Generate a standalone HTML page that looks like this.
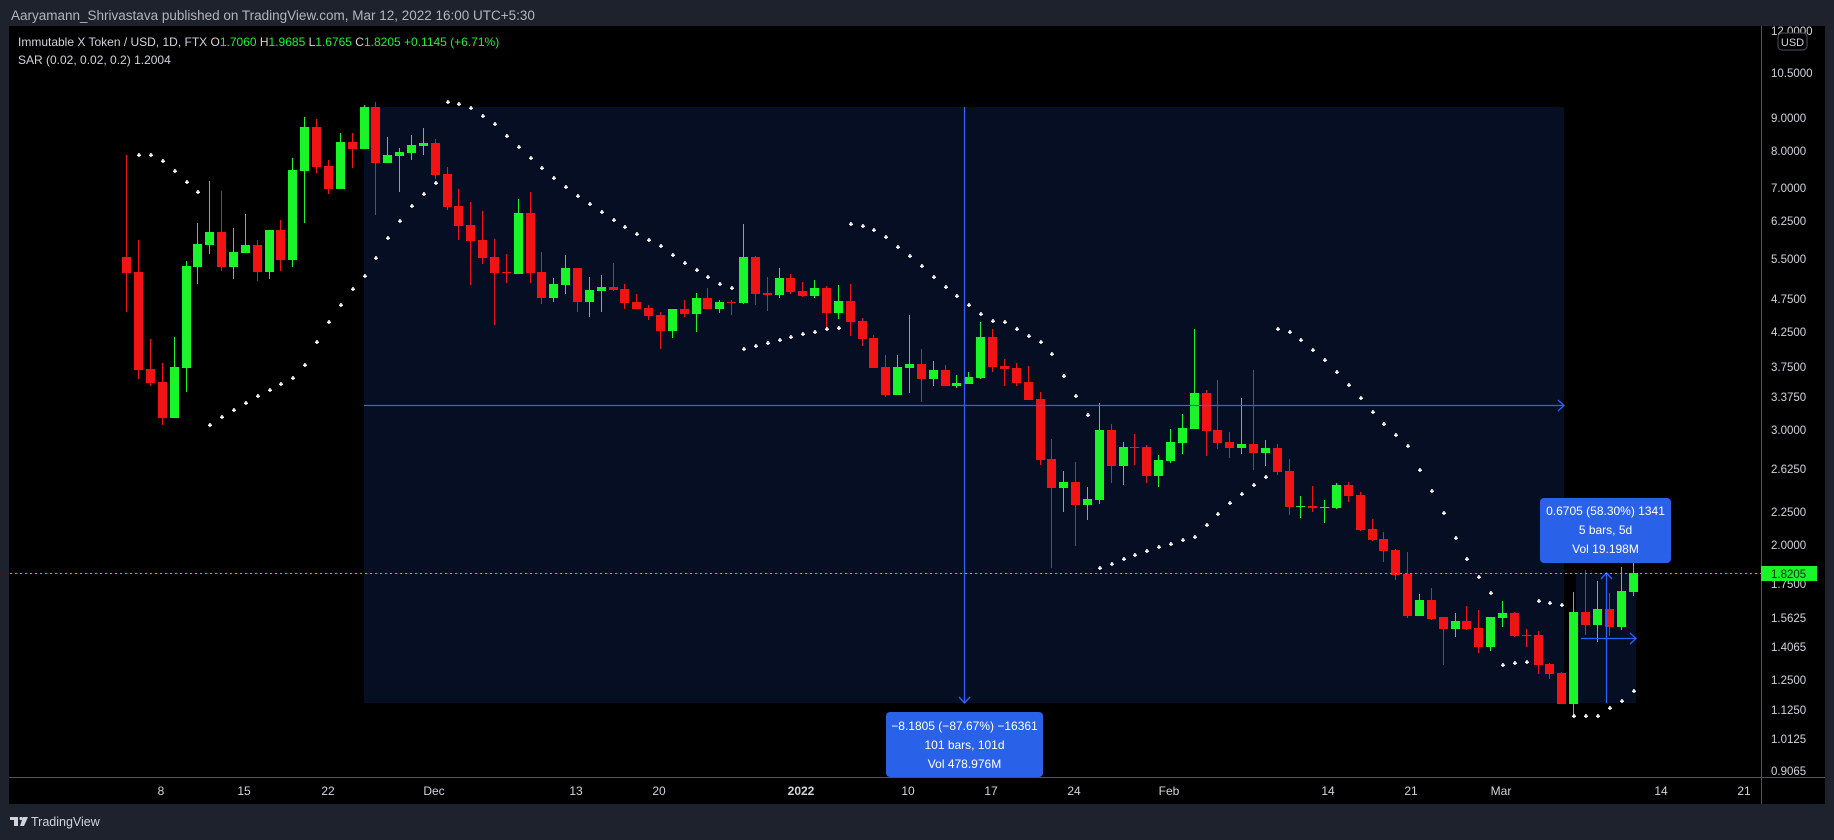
<!DOCTYPE html>
<html><head><meta charset="utf-8"><style>
html,body{margin:0;padding:0;background:#1e222d;width:1834px;height:840px;overflow:hidden;font-family:"Liberation Sans",sans-serif}
svg{position:absolute;left:0;top:0}
</style></head><body>
<svg id="s" width="1834" height="840" xmlns="http://www.w3.org/2000/svg">
<rect x="0" y="0" width="1834" height="840" fill="#1e222d"/>
<text x="11" y="20" fill="#b2b5be" font-size="13.5" font-family="Liberation Sans, sans-serif">Aaryamann_Shrivastava published on TradingView.com, Mar 12, 2022 16:00 UTC+5:30</text>
<rect x="9" y="26" width="1816" height="778" fill="#000"/>
<rect x="364" y="107" width="1200" height="596" fill="#060e23"/>
<rect x="1576" y="573" width="60" height="130" fill="#060e23"/>
<g id="c"></g>
<!-- measurement 1 -->
<line x1="364" y1="405.5" x2="1563" y2="405.5" stroke="#2962ff" stroke-width="1.3"/>
<polyline points="1558,400 1564,405.5 1558,411" fill="none" stroke="#2962ff" stroke-width="1.3"/>
<line x1="964.5" y1="107" x2="964.5" y2="702" stroke="#2962ff" stroke-width="1.3"/>
<polyline points="959,697 964.5,703 970,697" fill="none" stroke="#2962ff" stroke-width="1.3"/>
<rect x="886" y="712" width="157" height="65" rx="4" fill="#2962e8"/>
<text x="964.5" y="730" fill="#fff" font-size="12" text-anchor="middle">−8.1805 (−87.67%) −16361</text>
<text x="964.5" y="749" fill="#fff" font-size="12" text-anchor="middle">101 bars, 101d</text>
<text x="964.5" y="768" fill="#fff" font-size="12" text-anchor="middle">Vol 478.976M</text>
<!-- measurement 2 -->
<line x1="1581" y1="638.5" x2="1635" y2="638.5" stroke="#2962ff" stroke-width="1.3"/>
<polyline points="1630,633 1636,638.5 1630,644" fill="none" stroke="#2962ff" stroke-width="1.3"/>
<line x1="1606.5" y1="574" x2="1606.5" y2="703" stroke="#2962ff" stroke-width="1.3"/>
<polyline points="1601,579 1606.5,573 1612,579" fill="none" stroke="#2962ff" stroke-width="1.3"/>
<rect x="1540" y="498" width="131" height="65" rx="4" fill="#2962e8"/>
<text x="1605.5" y="515" fill="#fff" font-size="12" text-anchor="middle">0.6705 (58.30%) 1341</text>
<text x="1605.5" y="534" fill="#fff" font-size="12" text-anchor="middle">5 bars, 5d</text>
<text x="1605.5" y="553" fill="#fff" font-size="12" text-anchor="middle">Vol 19.198M</text>
<!-- last price line -->
<line x1="10" y1="573.5" x2="1761" y2="573.5" stroke="#1af52a" stroke-width="1" stroke-dasharray="2,3"/>
<!-- legend -->
<text x="18" y="46" font-size="12" fill="#d1d4dc">Immutable X Token / USD, 1D, FTX  O<tspan fill="#1af52a">1.7060</tspan>  H<tspan fill="#1af52a">1.9685</tspan>  L<tspan fill="#1af52a">1.6765</tspan>  C<tspan fill="#1af52a">1.8205</tspan>  <tspan fill="#1af52a">+0.1145 (+6.71%)</tspan></text>
<text x="18" y="64" font-size="12" fill="#d1d4dc">SAR (0.02, 0.02, 0.2)  1.2004</text>
<!-- axes -->
<line x1="1761.5" y1="26" x2="1761.5" y2="804" stroke="#50535e"/>
<line x1="9" y1="777.5" x2="1825" y2="777.5" stroke="#50535e"/>
<g id="ax" font-size="11.5" fill="#d1d4dc" font-family="Liberation Sans, sans-serif"></g>
<rect x="1761" y="566" width="56" height="15" fill="#1af52a"/>
<text x="1771" y="578" font-size="11.5" fill="#0a2a0a">1.8205</text>
<rect x="1778" y="33" width="29" height="17" rx="4" fill="#000" stroke="#50535e"/>
<text x="1792.5" y="46" font-size="11" fill="#d1d4dc" text-anchor="middle">USD</text>
<g id="tx" font-size="12" fill="#d1d4dc" text-anchor="middle"></g>
<!-- footer logo -->
<g fill="#d1d4dc"><rect x="10" y="817" width="8" height="3"/><rect x="14" y="817" width="4" height="9"/><circle cx="21" cy="818.5" r="1.6"/><polygon points="23,817 28,817 24,826 20,826"/></g>
<text x="31" y="826" font-size="12.5" fill="#d1d4dc">TradingView</text>
</svg>
<script>
var d="r257,273,155,312;r272,370,240,379;r369,383,339,386;r382,418,363,425;g367,418,337,418;g266,368,261,392;g244,267,223,284;g232,245,181,254;r232,267,191,271;g252,267,228,279;g245,253,214,253;r245,272,240,281;g230,272,230,279;r230,260,220,271;g170,260,158,267;g127,171,117,223;r127,167,119,173;r166,189,160,194;g142,189,133,189;r142,149,133,168;g107,149,105,149;r107,163,102,215;g155,163,137,163;g152,156,148,192;g145,153,135,160;g143,146,128,155;r143,175,139,179;r174,207,167,210;r206,226,189,240;r225,241,202,285;r240,258,211,264;r257,273,239,325;r272,273,254,283;g213,274,199,274;r213,273,192,283;r272,298,252,304;g284,298,278,302;g268,285,255,294;r268,302,268,312;g290,302,277,317;g287,291,275,312;r287,290,263,291;r289,303,284,309;r302,309,294,309;r308,316,305,320;r315,331,312,349;g309,331,309,338;r309,314,300,317;g298,314,293,332;r298,309,288,309;g302,309,300,313;r302,303,300,315;g257,303,224,304;r257,294,256,305;r293,295,277,311;g278,295,268,298;r278,292,274,294;r291,296,282,297;g288,296,280,298;r288,313,286,329;g301,313,285,319;r301,322,284,336;r321,339,318,346;r338,368,335,368;r367,395,355,397;g367,395,355,395;g364,368,315,393;r364,379,349,402;g370,379,361,386;r370,386,365,386;g383,386,375,388;g377,384,372,384;g337,378,322,379;r337,367,329,372;r366,369,359,386;r368,383,363,386;r382,400,366,400;r399,460,392,465;r459,488,439,568;g482,488,471,512;r482,505,462,546;g499,505,487,520;g430,500,403,504;r430,466,424,483;g447,466,442,485;r447,448,434,465;r447,476,445,483;g460,476,455,487;g442,461,429,463;g428,443,414,454;g393,429,329,429;r393,431,390,456;r430,443,380,449;r442,448,432,458;g444,448,398,454;r444,453,370,470;g448,453,440,466;r448,472,444,475;r471,507,459,515;g506,507,496,518;r506,508,486,512;g507,508,500,523;g485,508,483,509;r485,496,482,502;r495,530,492,531;r529,540,519,541;r539,551,532,562;r550,575,549,580;r574,616,552,618;g600,616,594,616;r600,619,588,620;r617,629,617,665;g621,629,613,637;r621,629,606,630;r628,647,610,653;g617,647,617,651;g613,618,601,627;r613,636,612,637;r635,636,629,647;r635,665,631,674;r664,674,663,679;r673,704,672,704;g612,704,592,716;r612,625,570,635;g609,625,581,642;r609,627,593,636;g591,627,567,630;g573,592,550,596".split(";");
var sar={1:155,2:155,3:161,4:171,5:182,6:192,7:425,8:417,9:410,10:403,11:396,12:390,13:384,14:378,15:365,16:342,17:322,18:305,19:289,20:276,21:258,22:238,23:221,24:206,25:194,26:183,27:102,28:104,29:108,30:116,31:124,32:136,33:147,34:158,35:168,36:178,37:187,38:196,39:204,40:212,41:220,42:227,43:234,44:240,45:246,46:255,47:263,48:270,49:277,50:284,51:288,52:349,53:346,54:343,55:340,56:337,57:334,58:332,59:329,60:328,61:224,62:226,63:230,64:237,65:247,66:256,67:266,68:277,69:287,70:296,71:305,72:314,73:321,74:322,75:329,76:336,77:342,78:354,79:376,80:396,81:415,82:568,83:564,84:559,85:555,86:551,87:547,88:544,89:540,90:537,91:525,92:514,93:503,94:494,95:485,96:477,97:329,98:332,99:340,100:350,101:360,102:372,103:385,104:398,105:412,106:424,107:435,108:446,109:470,110:491,111:513,112:538,113:559,114:577,115:593,116:665,117:663,118:662,119:601,120:603,121:605,122:716,123:716,124:716,125:708,126:701,127:691};
var h="",ns="";
for(var i=0;i<d.length;i++){var t=d[i][0],v=d[i].slice(1).split(",").map(Number);var x=Math.round(126.3+11.86*i);var c=t=="g"?"#1af52a":"#f21414";
h+='<rect x="'+x+'" y="'+v[2]+'" width="1" height="'+Math.max(1,v[3]-v[2])+'" fill="'+c+'"/>';
h+='<rect x="'+(x-4)+'" y="'+v[0]+'" width="9" height="'+Math.max(1,v[1]-v[0])+'" fill="'+c+'"/>';}
for(var k in sar){var x=Math.round(126.3+11.86*k),y=sar[k];h+='<rect x="'+(x-1)+'" y="'+(y-0.5)+'" width="4" height="1.5" fill="#fff"/><rect x="'+(x+0.2)+'" y="'+(y-2)+'" width="1.5" height="4" fill="#fff"/>';}
document.getElementById("c").innerHTML=h;
var ax=[["12.0000",31],["10.5000",73],["9.0000",118],["8.0000",151],["7.0000",188],["6.2500",221],["5.5000",259],["4.7500",299],["4.2500",332],["3.7500",367],["3.3750",397],["3.0000",430],["2.6250",469],["2.2500",512],["2.0000",545],["1.7500",584],["1.5625",618],["1.4065",647],["1.2500",680],["1.1250",710],["1.0125",739],["0.9065",771]];
var a="";ax.forEach(function(p){a+='<text x="1771" y="'+(p[1]+4)+'">'+p[0]+'</text>';});
document.getElementById("ax").innerHTML=a;
var tx=[["8",161],["15",244],["22",328],["Dec",434],["13",576],["20",659],["2022",801],["10",908],["17",991],["24",1074],["Feb",1169],["14",1328],["21",1411],["Mar",1501],["14",1661],["21",1744]];
var b="";tx.forEach(function(p){b+='<text x="'+p[1]+'" y="795"'+(p[0]=="2022"?' font-weight="bold"':'')+'>'+p[0]+'</text>';});
document.getElementById("tx").innerHTML=b;
</script>
</body></html>
